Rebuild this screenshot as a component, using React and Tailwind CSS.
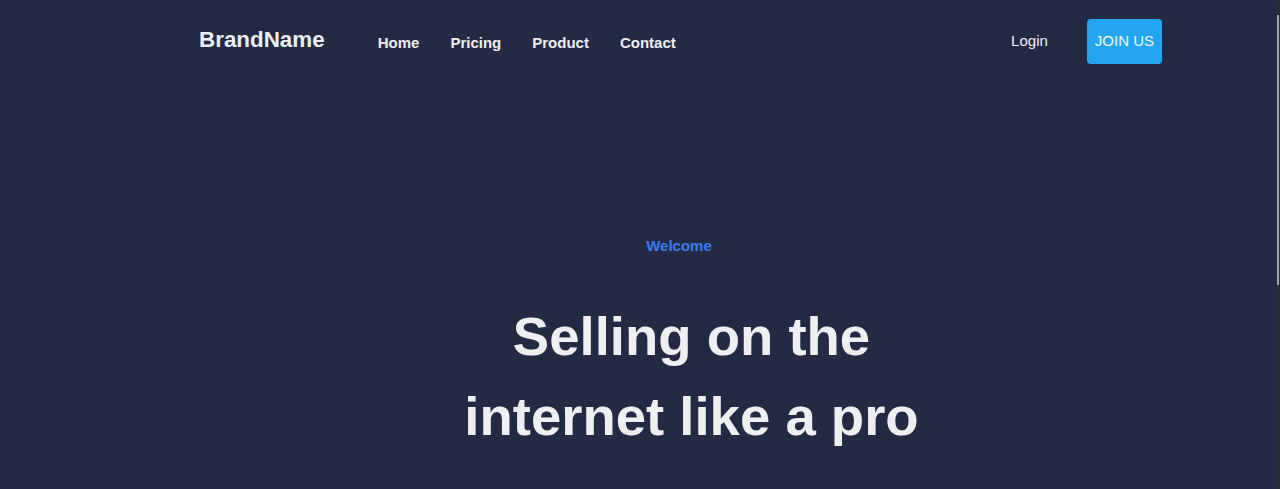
const links = ['Home', 'Pricing', 'Product', 'Contact'];

function Header() {
  return (
    <header className="flex h-[83px] items-center pl-[199px] pr-[115px]">
      <a className="-mt-[4px] text-[22.4px] font-bold text-[#eceef3]">BrandName</a>
      <nav className="ml-[53px] mt-[4px] flex items-center gap-[31px]">
        {links.map((link) => (
          <a key={link} className="text-[15px] font-bold text-[#eceef3]">
            {link}
          </a>
        ))}
      </nav>
      <div className="ml-auto flex items-center gap-[39px]">
        <a className="text-[15px] text-[#eceef3]">Login</a>
        <button className="h-[45px] rounded-[4px] bg-[#23a6f0] px-[8px] text-[15px] text-[#eef4fb]">
          JOIN US
        </button>
      </div>
    </header>
  );
}

function Hero() {
  return (
    <section className="flex flex-col items-center pl-[199px] pr-[118px] pt-[153px]">
      <p className="text-[15px] font-bold leading-[20px] text-[#3a7cf0]">Welcome</p>
      <h1 className="mt-[41px] w-[520px] pl-[25px] text-center text-[54.5px] font-bold leading-[80px] text-[#eeeff2]">
        Selling on the internet like a pro
      </h1>
    </section>
  );
}

export default function App() {
  return (
    <div className="flex h-[489px] overflow-hidden bg-[#252a44] font-['Liberation_Sans',Arial,sans-serif]">
      <main className="flex-1">
        <Header />
        <Hero />
      </main>
      <aside className="w-[3px] bg-[#2d2d2d] pt-[15px]">
        <div className="h-[270px] w-[2px] bg-[#a3a3a3]" />
      </aside>
    </div>
  );
}
